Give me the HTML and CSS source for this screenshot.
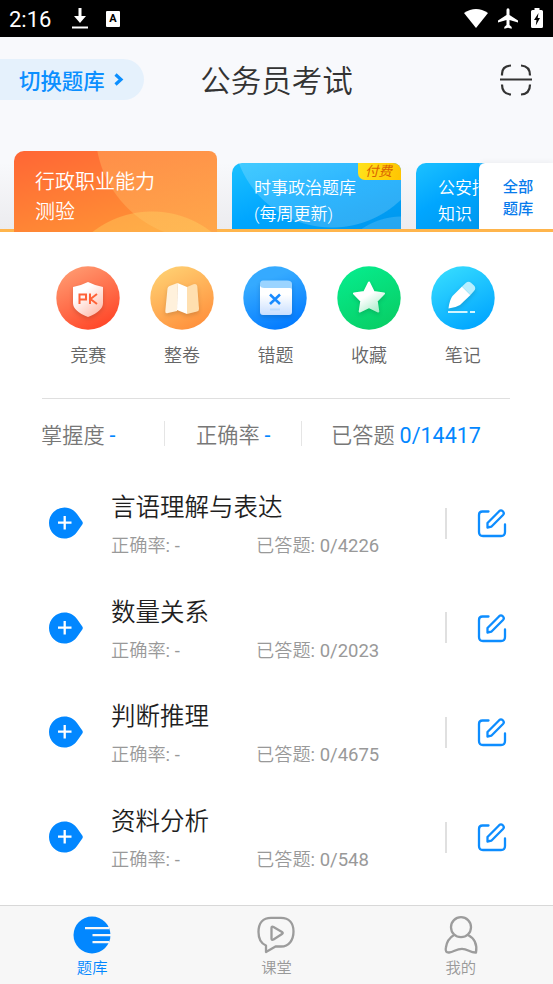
FILE: index.html
```html
<!DOCTYPE html>
<html lang="zh-CN">
<head>
<meta charset="utf-8">
<title>公务员考试</title>
<link rel="stylesheet" href="styles.css">
</head>
<body>
<svg class="defs" width="0" height="0">
  <defs>
    <linearGradient id="red" x1=".2" y1="0" x2=".7" y2="1"><stop stop-color="#ff9c72"/><stop offset="1" stop-color="#ff4527"/></linearGradient>
    <linearGradient id="amber" x1=".2" y1="0" x2=".7" y2="1"><stop stop-color="#ffd173"/><stop offset="1" stop-color="#ff903c"/></linearGradient>
    <linearGradient id="blue" x1=".3" y1="0" x2=".7" y2="1"><stop offset=".2" stop-color="#35aaff"/><stop offset="1" stop-color="#0078ff"/></linearGradient>
    <linearGradient id="green" x1=".2" y1="0" x2=".7" y2="1"><stop stop-color="#06ec8d"/><stop offset="1" stop-color="#08ce65"/></linearGradient>
    <linearGradient id="cyan" x1=".2" y1="0" x2=".7" y2="1"><stop stop-color="#36dcff"/><stop offset="1" stop-color="#00a5ff"/></linearGradient>
    <linearGradient id="fadeRed" x1=".3" y1=".3" x2=".8" y2="1"><stop stop-color="#fff"/><stop offset="1" stop-color="#ffb9a8"/></linearGradient>
    <linearGradient id="fadeBlue" x1="0" y1="0" x2="0" y2="1"><stop offset=".3" stop-color="#fff"/><stop offset="1" stop-color="#c9dfff"/></linearGradient>
    <linearGradient id="fadeGreen" x1=".3" y1=".2" x2=".8" y2="1"><stop offset=".3" stop-color="#fff"/><stop offset="1" stop-color="#a9edc9"/></linearGradient>
    <symbol id="plus" viewBox="0 0 34 32"><path fill="#0287ff" d="M15.500 .5C21 .5 25 3 28 7L33.300 14.500Q34.300 16 33.300 17.500L28 25C25 29 21 31.500 15.500 31.500A15.500 15.500 0 0 1 15.500 .5Z"/><path d="M9 15.700H22.500M15.700 9V22.400" stroke="#fff" stroke-width="2.300" fill="none"/></symbol>
    <symbol id="edit" viewBox="0 0 30 30"><g fill="none" stroke="#0d8dff" stroke-width="2.300" stroke-linejoin="round" stroke-linecap="round"><path d="M11.500 3.500H5.500Q2 3.500 2 7V24Q2 28 6 28H24Q28 28 28 24V16.500"/><path d="M10.500 19.500V15L22.200 3.200Q24 1.500 25.800 3.300Q27.700 5.200 26 7L14.300 18.700Z"/></g></symbol>
  </defs>
</svg>
<div class="app">
  <div class="status">
    <span class="clock">2:16</span>
    <svg class="s-down" width="16" height="21" viewBox="0 0 16 21"><path fill="#fff" d="M6.500 0H9.500V8H14L8 15L2 8H6.500ZM0 18.500H16V20.500H0Z"/></svg>
    <span class="s-a">A</span>
    <svg class="s-wifi" width="24" height="19" viewBox="0 0 24 19"><path fill="#fff" d="M0 4Q12-4 24 4L12 19Z"/></svg>
    <svg class="s-plane" width="20" height="21" viewBox="0 0 20 21"><path fill="#fff" d="M8.500 7V2Q8.500.2 10 .2T11.500 2V7L20 12.500V14.500L11.500 12V17L13.700 19V20.700L10 19.700L6.300 20.700V19L8.500 17V12L0 14.500V12.500Z"/></svg>
    <svg class="s-bat" width="12" height="21" viewBox="0 0 12 21"><path fill="#fff" d="M3.500 0H8.500V2H10.500Q12 2 12 3.500V18.500Q12 20 10.500 20H1.500Q0 20 0 18.500V3.500Q0 2 1.500 2H3.500Z"/><path fill="#000" d="M7.500 5L3 12H5.500L4.800 17.500L9 10H6.700Z"/></svg>
  </div>
  <header class="head">
    <div class="switch"><span>切换题库</span><svg width="10" height="13" viewBox="0 0 10 13"><path d="M1.500 1.500L7 6.500L1.500 11.500" fill="none" stroke="#0b8fff" stroke-width="3.200"/></svg></div>
    <h1>公务员考试</h1>
    <svg class="scan" width="32" height="32" viewBox="0 0 32 32"><g fill="none" stroke="#333" stroke-width="2.200"><path d="M0 15.500H32M2 11.500V10Q2 2 11 1.500M21 1.500Q30 2 30 11.500M2 20.500Q2 30 11 30.500M21 30.500Q30 30 30 20.500"/></g></svg>
  </header>
  <section class="tabs">
    <div class="tab active"><p>行政职业能力<br>测验</p></div>
    <div class="tab"><p>时事政治题库<br>(每周更新)</p><span class="paid">付费</span></div>
    <div class="tab cut"><p>公安招<br>知识</p></div>
    <div class="all">全部<br>题库</div>
  </section>
  <nav class="tools">
    <div><svg viewBox="0 0 64 64"><circle cx="32" cy="32" r="31.700" fill="url(#red)"/><path class="lift" fill="url(#fadeRed)" d="M32 16Q40 20 47 21V37Q47 45 32 51Q17 45 17 37V21Q24 20 32 16Z"/><path d="M23.500 38V28.500H30V33.500H23.500M34 27.500V38M41 28L34.500 33L41 38" fill="none" stroke="#ff6238" stroke-width="2"/></svg><span>竞赛</span></div>
    <div><svg viewBox="0 0 64 64"><circle cx="32" cy="32" r="31.700" fill="url(#amber)"/><g class="lift"><path fill="#fff1dc" d="M27.500 17L19.500 20Q17.800 20.600 17.500 22.500L15.300 45Q15 48 18 47L27 45Z"/><path fill="#fff" d="M27.500 17L37 21V48L27 44Z"/><path fill="#ffdfaf" d="M37 21L43.500 18.300Q47 17 47.300 20.500L49 43Q49 45 47 45.500L37 48Z"/></g></svg><span>整卷</span></div>
    <div><svg viewBox="0 0 64 64"><circle cx="32" cy="32" r="31.700" fill="url(#blue)"/><g class="lift"><path fill="#9bd4ff" d="M20 14.500H44Q49 14.500 49 18V26H17V18Q17 14.500 20 14.500Z"/><path fill="url(#fadeBlue)" d="M17 20Q18 22 21 22H47Q49 22 49 24V46Q49 49 46 49H20Q17 49 17 46Z"/></g><path d="M27 28.500L37 38M37 28.500L27 38" stroke="#198bff" stroke-width="2.500"/><path d="M27 43.500H37" stroke="#bddcff" stroke-width="2"/></svg><span>错题</span></div>
    <div><svg viewBox="0 0 64 64"><circle cx="32" cy="32" r="31.700" fill="url(#green)"/><path class="lift" fill="url(#fadeGreen)" stroke="url(#fadeGreen)" stroke-width="2" stroke-linejoin="round" d="M32 16.500L36.700 26L47 27.500L39.700 35L41.300 45.500L32 41L22.700 45.500L24.300 35L17 27.500L27.300 26Z"/></svg><span>收藏</span></div>
    <div><svg viewBox="0 0 64 64"><circle cx="32" cy="32" r="31.700" fill="url(#cyan)"/><g class="lift"><path fill="#fff" d="M31 20.500L39.500 29L29 39Q24 42 17.500 42.500Q18.500 34 21.500 30Z"/><path fill="#b7efff" d="M31 20.500L35 16.800Q37.500 14.500 40 16.800L43 19.500Q45.500 22 43 25L39.500 29Z"/></g><path d="M17 46H36.500M39 46H44" stroke="#d2f5ff" stroke-width="2"/></svg><span>笔记</span></div>
  </nav>
  <section class="stats">
    <div>掌握度<b>-</b></div><i></i><div>正确率<b>-</b></div><i></i><div>已答题<b>0/14417</b></div>
  </section>
  <main class="list">
    <article><svg class="plus"><use href="#plus"/></svg><div class="info"><h2>言语理解与表达</h2><p><span>正确率<em>: -</em></span><span>已答题<em>: 0/4226</em></span></p></div><i></i><svg class="edit"><use href="#edit"/></svg></article>
    <article><svg class="plus"><use href="#plus"/></svg><div class="info"><h2>数量关系</h2><p><span>正确率<em>: -</em></span><span>已答题<em>: 0/2023</em></span></p></div><i></i><svg class="edit"><use href="#edit"/></svg></article>
    <article><svg class="plus"><use href="#plus"/></svg><div class="info"><h2>判断推理</h2><p><span>正确率<em>: -</em></span><span>已答题<em>: 0/4675</em></span></p></div><i></i><svg class="edit"><use href="#edit"/></svg></article>
    <article><svg class="plus"><use href="#plus"/></svg><div class="info"><h2>资料分析</h2><p><span>正确率<em>: -</em></span><span>已答题<em>: 0/548</em></span></p></div><i></i><svg class="edit"><use href="#edit"/></svg></article>
  </main>
  <footer class="bar">
    <div class="on"><svg width="38" height="38" viewBox="0 0 38 38"><circle cx="19" cy="19" r="18.500" fill="#0287ff"/><path d="M12 12.200H36M19.500 19.200H38M19.500 26.200H36" stroke="#f7f7f7" stroke-width="2.200"/></svg><span>题库</span></div>
    <div><svg width="38" height="38" viewBox="0 0 38 38"><g fill="none" stroke="#9c9c9c" stroke-width="2.300" stroke-linejoin="round"><path d="M14 1.800H24C32 1.800 36.500 7 36.500 15.500S32 30.500 24 30.500H18.500L9 36V29.500C4 27.500 1.500 23 1.500 16C1.500 7 6 1.800 14 1.800Z"/><path d="M14.500 12Q14.500 10 16.500 11L25 16Q26.500 17 25 18L16.500 23.500Q14.500 24.500 14.500 22.500Z"/></g></svg><span>课堂</span></div>
    <div><svg width="38" height="38" viewBox="0 0 38 38"><g fill="none" stroke="#9c9c9c" stroke-width="2.300" stroke-linejoin="round"><circle cx="19" cy="11.200" r="10"/><path d="M12 19Q5 23 3.800 32Q3 36.800 7 36.500C12 36 14 32.800 20 32.800S28 36.800 34 36.500Q36 24 26 19"/></g></svg><span>我的</span></div>
  </footer>
</div>
</body>
</html>
```
FILE: styles.css
```css
* { box-sizing: border-box; }
body { margin: 0; background: #fff; color: #222; font-family: Roboto, "Noto Sans CJK SC", sans-serif; font-weight: 350; }
h1, h2, p { margin: 0; font-weight: inherit; }
em { font-style: normal; font-weight: 400; }
svg { display: block; flex: none; }
.defs { position: absolute; }
.app { width: 553px; height: 984px; display: flex; flex-direction: column; overflow: hidden; }

.status { height: 37px; background: #000; color: #fff; display: flex; align-items: center; padding: 0 10px 0 9px; flex: none; }
.clock { font-size: 22px; font-weight: 450; width: 63px; padding-top: 2px; }
.s-a { width: 14px; height: 16px; margin-left: 18px; border-radius: 1px; background: #fff; color: #000; font-size: 11px; font-weight: 700; line-height: 15px; text-align: center; }
.s-wifi { margin-left: auto; }
.s-plane { margin-left: 10px; }
.s-bat { margin-left: 13px; }

.head { height: 103px; flex: none; background: #f8f9fc; display: grid; grid-template-columns: 144px 1fr 144px; align-items: start; padding-top: 22px; }
.switch { height: 41px; border-radius: 0 21px 21px 0; background: #e5f1fc; color: #0b8fff; font-size: 21.4px; font-weight: 500; display: flex; align-items: center; gap: 9px; padding: 0 0 1px 19px; }
h1 { font-size: 30.5px; line-height: 42px; text-align: center; color: #333; padding-top: 1.5px; }
.scan { justify-self: end; margin: 5px 21px 0 0; }

.tabs { position: relative; height: 92px; flex: none; display: flex; align-items: flex-end; gap: 15px; padding-left: 14px; background: linear-gradient(#f8f9fc 25%, #ececef); border-bottom: 3px solid #ffb54c; }
.tab { position: relative; flex: none; width: 169px; height: 66px; border-radius: 10px 0 0 0; padding: 12px 0 0 22px; color: #fff; font-size: 17px; line-height: 26px; overflow: hidden; background: radial-gradient(circle at 170px 125px, rgba(255,255,255,.15) 71px, transparent 72px), radial-gradient(circle at 100px -35px, rgba(255,255,255,.18) 99px, transparent 100px), linear-gradient(160deg, #1cc1ff, #00a6ff 48%, #0096ec); border-top-right-radius: 8px; }
.tab.active { width: 203px; height: 81px; margin-bottom: -3px; padding: 16px 0 0 21px; font-size: 20px; line-height: 30px; background: radial-gradient(circle at 138px 157px, rgba(255,211,98,.4) 96px, transparent 97px), radial-gradient(circle at 190px -20px, rgba(255,184,100,.43) 108px, transparent 109px), linear-gradient(165deg, #ff6635, #ff9a35); }
.tab.cut { width: 70px; border-top-right-radius: 0; white-space: nowrap; background: radial-gradient(circle at 156px -35px, rgba(255,255,255,.18) 99px, transparent 100px), linear-gradient(150deg, #1cc1ff, #00a6ff 48%, #0096ec); }
.paid { position: absolute; top: 0; right: 0; width: 43px; height: 17px; background: linear-gradient(100deg, #ffe21c, #ffc400); color: #d96200; border-radius: 0 0 0 7px; font-size: 13.5px; font-weight: 400; line-height: 16px; font-style: italic; text-align: center; padding-right: 2px; }
.all { position: absolute; right: 0; bottom: 0; width: 74px; height: 66px; border-radius: 6px 0 0 0; background: #fff; color: #087bec; font-size: 15.3px; line-height: 21.5px; font-weight: 500; padding: 14px 0 0 4px; text-align: center; box-shadow: 0 -2px 5px rgba(0,0,0,.04); }

.tools { height: 167px; flex: none; margin: 0 43.5px 0 41.5px; padding: 34px 0 0; display: grid; grid-template-columns: repeat(5, 1fr); border-bottom: 1px solid #dfdfdf; justify-items: center; }
.tools svg { width: 64px; height: 64px; }
.tools div { display: flex; flex-direction: column; align-items: center; }
.tools span { margin-top: 13px; font-size: 18px; line-height: 26px; color: #666; }
.lift { filter: drop-shadow(0 2px 2px rgba(0,0,0,.15)); }

.stats { height: 72px; flex: none; display: flex; align-items: center; padding: 0 0 3px 41px; color: #777; font-size: 21.2px; }
.stats b { color: #0287ff; font-weight: 400; margin-left: 5px; font-size: 21.5px; }
.stats i { width: 1px; height: 25px; background: #e5e5e5; }
.stats div:nth-of-type(1) { width: 123px; }
.stats div:nth-of-type(2) { width: 136px; padding-left: 31px; }
.stats div:nth-of-type(3) { padding-left: 29px; }

.list { flex: 1; }
article { height: 104.6px; display: flex; align-items: center; padding-left: 49px; }
.plus { width: 34px; height: 32px; }
.info { width: 334px; margin-left: 28px; padding-top: 3.4px; }
.info h2 { font-size: 24.5px; line-height: 36px; color: #1f1f1f; }
.info p { display: flex; margin-top: 6px; font-size: 18.2px; line-height: 28px; color: #999; }
.info p span:first-child { width: 145px; }
.info em { font-size: 18.5px; }
article i { width: 2px; height: 31px; background: #e0e0e0; }
.edit { width: 30px; height: 30px; margin-left: 30px; }

.bar { height: 79px; flex: none; background: #f7f7f7; border-top: 1px solid #d8d8d8; display: grid; grid-template-columns: repeat(3, 1fr); color: #999; font-size: 15.3px; }
.bar div { display: flex; flex-direction: column; align-items: center; padding-top: 10px; }
.bar span { line-height: 22px; margin-top: 3px; }
.bar .on { color: #0287ff; }
```
